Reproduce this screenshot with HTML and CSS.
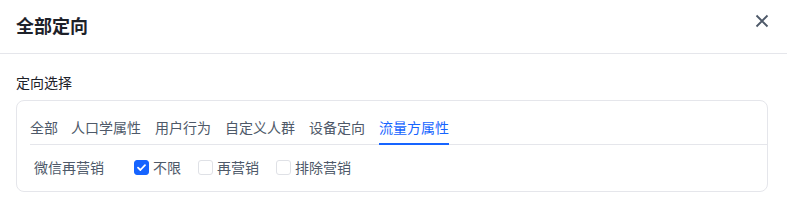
FILE: index.html
```html
<!DOCTYPE html>
<html lang="zh-CN">

<head>
    <meta charset="UTF-8">
    <meta name="viewport" content="width=device-width, initial-scale=1.0">
    <title>全部定向</title>
    <link rel="stylesheet" href="styles.css">
</head>

<body>
    <div class="modal">
        <div class="modal-header">
            <h3 class="modal-title">全部定向</h3>
            <span class="close">
                <svg width="14" height="14" viewBox="0 0 14 14">
                    <path d="M1.5 1.5 L12.5 12.5 M12.5 1.5 L1.5 12.5" stroke="#4e5969" stroke-width="1.8" fill="none" />
                </svg>
            </span>
        </div>
        <div class="modal-body">
            <div class="section-label">定向选择</div>
            <div class="card">
                <ul class="tabs">
                    <li>全部</li>
                    <li>人口学属性</li>
                    <li>用户行为</li>
                    <li>自定义人群</li>
                    <li>设备定向</li>
                    <li class="active">流量方属性</li>
                </ul>
                <div class="row">
                    <span class="row-label">微信再营销</span>
                    <label class="check checked"><i></i>不限</label>
                    <label class="check"><i></i>再营销</label>
                    <label class="check"><i></i>排除营销</label>
                </div>
            </div>
        </div>
    </div>
</body>

</html>
```

FILE: styles.css
```css
* {
    padding: 0;
    margin: 0;
    box-sizing: border-box;
}

body {
    background: #fff;
    font-family: "Noto Sans CJK SC", "Noto Sans", sans-serif;
    color: #1d2129;
}

.modal-header {
    display: flex;
    justify-content: space-between;
    height: 54px;
    padding: 12px 18px 0 16px;
    border-bottom: 1px solid #e5e6eb;
}

.modal-title {
    font-size: 18px;
    line-height: 26px;
    font-weight: 700;
    color: #1d2129;
}

.close {
    display: block;
    width: 14px;
    height: 14px;
    margin-top: 2px;
}

.close svg {
    display: block;
}

.modal-body {
    padding: 17px 19px 0 16px;
}

.section-label {
    font-size: 14px;
    line-height: 22px;
    color: #1d2129;
}

.card {
    margin-top: 7px;
    border: 1px solid #e5e6eb;
    border-radius: 8px;
    padding: 15px 0 0 13px;
}

.tabs {
    display: flex;
    list-style: none;
    border-bottom: 1px solid #e5e6eb;
}

.tabs li {
    font-size: 14px;
    line-height: 22px;
    color: #4e5969;
    padding-bottom: 5px;
    margin: 0 14px -1px 0;
    border-bottom: 2px solid transparent;
}

.tabs li:first-child {
    margin-right: 13px;
}

.tabs li.active {
    color: #1664ff;
    border-bottom-color: #1664ff;
}

.row {
    display: flex;
    align-items: center;
    padding: 11px 0 13px 4px;
    font-size: 14px;
    line-height: 22px;
}

.row-label {
    width: 100px;
    color: #4e5969;
}

.check {
    display: flex;
    align-items: center;
    margin-right: 17px;
    color: #4e5969;
}

.check i {
    display: block;
    width: 15px;
    height: 15px;
    margin-right: 4px;
    border: 1px solid #dfe1e6;
    border-radius: 3px;
    background: #fff;
}

.check.checked i {
    border-color: #1664ff;
    background: #1664ff url("data:image/svg+xml,%3Csvg xmlns='http://www.w3.org/2000/svg' width='15' height='15' viewBox='0 0 15 15'%3E%3Cpath d='M4 7.6 L6.4 10 L11 5.2' stroke='%23fff' stroke-width='1.8' fill='none' stroke-linecap='round' stroke-linejoin='round'/%3E%3C/svg%3E") center / 15px 15px no-repeat;
}
```
